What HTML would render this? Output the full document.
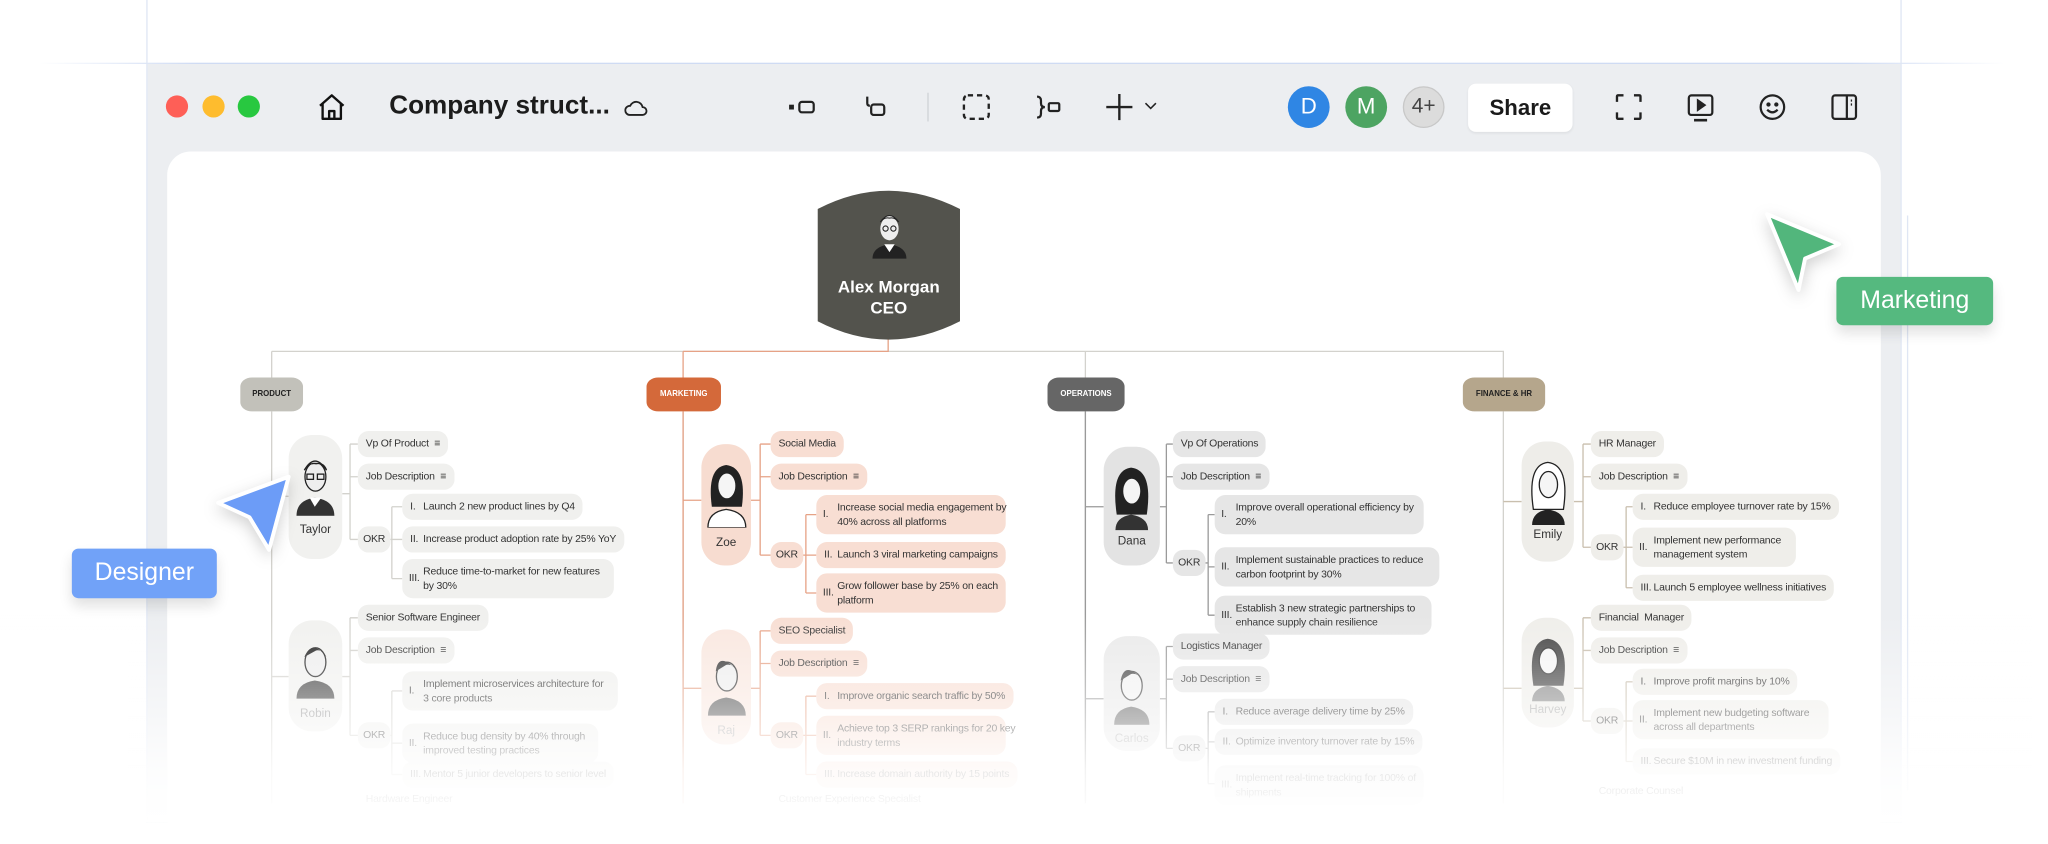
<!DOCTYPE html>
<html><head><meta charset="utf-8"><style>
*{margin:0;padding:0;box-sizing:border-box}
html,body{width:2048px;height:823px;overflow:hidden;background:#fff}
#s{position:absolute;left:0;top:0;width:1568px;height:630px;transform:scale(1.30612);transform-origin:0 0;font-family:"Liberation Sans",sans-serif}
.a{position:absolute}
.c{position:absolute;height:20px;padding:0 6px;border-radius:8px;font:8px "Liberation Sans Narrow","Liberation Sans",sans-serif;line-height:20px;letter-spacing:-0.15px;color:#333;white-space:nowrap;background:#f0f0ee}
.c.c2{height:30px;line-height:11px;padding-top:4px}
.c .n{display:inline-block;width:10px}
.c2 .n{position:absolute;left:5px;top:9px}
.c2 .t{display:block;padding-left:10px}
.m{background:#f8ded3}
.o{background:#e6e6e6}
.f{background:#efeeea}
.av{position:absolute;border-radius:18px;width:41px}
.nm{position:absolute;width:100%;text-align:center;font:9px "Liberation Sans Narrow","Liberation Sans",sans-serif;color:#333}
.dep{position:absolute;height:26px;top:289px;font:bold 6px "Liberation Sans Narrow","Liberation Sans",sans-serif;text-align:center;line-height:26px;border-radius:9px/7px}
.ic{position:absolute;top:71px}
</style></head><body><div id="s">
<div class="a" style="left:30px;top:48px;width:1505px;height:1px;background:linear-gradient(90deg,#fff,#cfdbf3 8%,#cfdbf3 92%,#fff)"></div>
<div class="a" style="left:112px;top:0;width:1px;height:630px;background:#dfe6f4"></div>
<div class="a" style="left:1455px;top:0;width:1px;height:630px;background:#dfe6f4"></div>
<div class="a" style="left:1460px;top:165px;width:1px;height:440px;background:#dfe6f4"></div>
<div class="a" style="left:113px;top:49px;width:1342px;height:581px;background:#eceef1"></div>
<div class="a" style="left:128px;top:116px;width:1312px;height:530px;background:#fff;border-radius:18px"></div>
<div class="a" style="left:127px;top:73px;width:17px;height:17px;border-radius:50%;background:#fe5f57"></div>
<div class="a" style="left:155px;top:73px;width:17px;height:17px;border-radius:50%;background:#febc2e"></div>
<div class="a" style="left:182px;top:73px;width:17px;height:17px;border-radius:50%;background:#28c840"></div>
<svg class="a" style="left:242px;top:70px" width="24" height="24" viewBox="0 0 24 24" fill="none" stroke="#111" stroke-width="1.8" stroke-linejoin="round"><path d="M3 11L12 3l9 8M5 9.5V21h14V9.5M10 21v-6h4v6"/></svg>
<div class="a" style="left:298px;top:70px;font-weight:bold;font-size:20px;color:#1c1c1c">Company struct...</div>
<svg class="a" style="left:478px;top:74px" width="18" height="16" viewBox="0 0 18 16" fill="none" stroke="#222" stroke-width="1.4"><path d="M4 14h10a3 3 0 0 0 0-6 5 5 0 0 0-9.5-1A3.5 3.5 0 0 0 4 14z"/></svg>
<svg class="ic" style="left:603px" width="24" height="22" viewBox="0 0 24 22" fill="none" stroke="#222" stroke-width="1.7"><rect x="2" y="10" width="2" height="2" fill="#222"/><rect x="9" y="7" width="11" height="8" rx="2"/></svg>
<svg class="ic" style="left:659px" width="24" height="22" viewBox="0 0 24 22" fill="none" stroke="#222" stroke-width="1.7"><path d="M5 3v5q0 2 2 2"/><rect x="8" y="9" width="10" height="8" rx="2"/></svg>
<div class="a" style="left:710px;top:71px;width:1px;height:22px;background:#cfd2d6"></div>
<svg class="ic" style="left:736px" width="24" height="22" viewBox="0 0 24 22" fill="none" stroke="#222" stroke-width="1.8" stroke-dasharray="4 3"><rect x="2" y="2" width="19" height="18" rx="3"/></svg>
<svg class="ic" style="left:791px" width="24" height="22" viewBox="0 0 24 22" fill="none" stroke="#222" stroke-width="1.7"><path d="M3 3q3 0 3 3v2q0 3 3 3q-3 0-3 3v2q0 3-3 3"/><rect x="12" y="8" width="8" height="6" rx="1"/></svg>
<svg class="ic" style="left:845px" width="44" height="22" viewBox="0 0 44 22" fill="none" stroke="#222" stroke-width="1.8"><path d="M12 1v20M2 11h20"/><path d="M32 8l4 4 4-4" stroke-width="1.2"/></svg>
<div class="a" style="left:986px;top:66px;width:32px;height:32px;border-radius:50%;background:#2f86e4;color:#fff;font-size:17px;line-height:32px;text-align:center">D</div>
<div class="a" style="left:1030px;top:66px;width:32px;height:32px;border-radius:50%;background:#4da462;color:#fff;font-size:17px;line-height:32px;text-align:center">M</div>
<div class="a" style="left:1074px;top:66px;width:32px;height:32px;border-radius:50%;background:#dcdcdc;border:1px solid #c8c8c8;color:#444;font-size:16px;line-height:30px;text-align:center">4+</div>
<div class="a" style="left:1124px;top:64px;width:80px;height:37px;border-radius:6px;background:#fff;box-shadow:0 1px 2px rgba(0,0,0,.06);color:#1a1a1a;font-size:17px;font-weight:bold;line-height:37px;text-align:center">Share</div>
<svg class="ic" style="left:1236px" width="22" height="22" viewBox="0 0 22 22" fill="none" stroke="#222" stroke-width="1.8"><path d="M2 7V3q0-1 1-1h4M15 2h4q1 0 1 1v4M20 15v4q0 1-1 1h-4M7 20H3q-1 0-1-1v-4"/></svg>
<svg class="ic" style="left:1291px" width="22" height="24" viewBox="0 0 22 24" fill="none" stroke="#222" stroke-width="1.7"><rect x="2" y="2" width="18" height="15" rx="2"/><path d="M9 6l5 3.5L9 13z" fill="#222"/><path d="M6 21h10" stroke-width="2"/></svg>
<svg class="ic" style="left:1346px" width="22" height="22" viewBox="0 0 22 22" fill="none" stroke="#222" stroke-width="1.7"><circle cx="11" cy="11" r="9"/><circle cx="8" cy="9" r=".8" fill="#222"/><circle cx="14" cy="9" r=".8" fill="#222"/><path d="M7 13q4 4 8 0"/></svg>
<svg class="ic" style="left:1401px" width="22" height="22" viewBox="0 0 22 22" fill="none" stroke="#222" stroke-width="1.7"><rect x="2" y="2" width="18" height="18" rx="2"/><path d="M13 2v18M16 6h1M16 9h1"/></svg>

<svg class="a" style="left:0;top:0" width="1568" height="630" fill="none" stroke-width="1">
<g stroke="#d3d2cd"><path d="M208 269H680M680 269H1151V289M208 269V289M831 269V289M208 315V615M523 315V615M831 315V615M1151 315V615"/>
<path d="M208 380H221M262 378H268M268 340V413M268 340h6M268 365h6M268 413h6M296 413h4M300 388V443M300 388h8M300 413h8M300 443h8"/>
<path d="M208 518H221M262 518H268M268 473V563M268 473h6M268 498h6M268 563h6M296 563h4M300 529V593M300 529h8M300 569h8M300 593h8"/></g>
<g stroke="#e6a286"><path d="M523 269H680V258M523 269V289M523 315V615"/>
<path d="M523 383H537M575 383H582M582 340V425M582 340h8M582 365h8M582 425h8M612 425h5M617 394V454M617 394h8M617 425h8M617 454h8"/>
<path d="M523 527H537M575 527H582M582 483V563M582 483h8M582 508h8M582 563h8M612 563h5M617 533V593M617 533h8M617 563h8M617 593h8"/></g>
<g stroke="#9a9a9a"><path d="M831 315V615M831 388H845M888 388H893M893 340V431M893 340h5M893 365h5M893 431h5M920 431h5M925 394V471M925 394h5M925 434h5M925 471h5"/>
<path d="M831 535H845M888 535H893M893 495V573M893 495h5M893 520h5M893 573h5M920 573h5M925 545V600M925 545h5M925 568h5M925 600h5"/></g>
<g stroke="#c9bfae"><path d="M1151 384H1165M1205 384H1212M1212 340V419M1212 340h6M1212 365h6M1212 419h6M1240 419h5M1245 388V450M1245 388h5M1245 419h5M1245 450h5"/>
<path d="M1151 527H1165M1205 527H1212M1212 473V552M1212 473h6M1212 498h6M1212 552h6M1240 552h5M1245 522V583M1245 522h5M1245 552h5M1245 583h5"/></g>
</svg>

<svg class="a" style="left:626px;top:140px" width="109" height="126" viewBox="0 0 109 126"><path d="M0 20Q54-8 109 20V106Q54 134 0 106Z" fill="#53534d"/>
<g transform="translate(38,18)"><path d="M4 40q0-9 13-11q13 2 13 11z" fill="#222"/><path d="M13 29l4 6 4-6" fill="#fff"/><ellipse cx="17" cy="17" rx="7" ry="9" fill="#eee"/><path d="M10 12q7-10 14 0q-3-4-7-3q-4-1-7 3z" fill="#ddd" stroke="#222" stroke-width=".8"/><circle cx="14" cy="17" r="2" fill="none" stroke="#222" stroke-width=".8"/><circle cx="20" cy="17" r="2" fill="none" stroke="#222" stroke-width=".8"/></g>
<text x="54.5" y="84" fill="#fff" font-family="Liberation Sans" font-weight="bold" font-size="13" text-anchor="middle">Alex Morgan</text>
<text x="54.5" y="100" fill="#fff" font-family="Liberation Sans" font-weight="bold" font-size="13" text-anchor="middle">CEO</text></svg>

<div class="dep" style="left:184px;width:48px;background:#c2c1ba;color:#222">PRODUCT</div>
<div class="dep" style="left:495px;width:57px;background:#d4693a;color:#fff">MARKETING</div>
<div class="dep" style="left:802px;width:59px;background:#666;color:#fff">OPERATIONS</div>
<div class="dep" style="left:1120px;width:63px;background:#b5a68c;color:#222">FINANCE &amp; HR</div>

<div class="av" style="left:221px;top:333px;height:95px;background:#f1f1ef"><svg class="a" style="left:4px;top:10px" width="33" height="52" viewBox="0 0 33 52"><path d="M2 52q0-12 14-14q15 2 15 14z" fill="#333"/><path d="M12 38l4 7 5-7z" fill="#fff"/><ellipse cx="16.5" cy="22" rx="8" ry="11" fill="#eee" stroke="#222"/><path d="M8 17q8-14 17 0q-2-6-8-5q-6-1-9 5z" fill="#ccc" stroke="#222"/><rect x="10" y="20" width="5" height="4" fill="none" stroke="#222"/><rect x="18" y="20" width="5" height="4" fill="none" stroke="#222"/></svg><div class="nm" style="top:67px">Taylor</div></div>
<div class="av" style="left:221px;top:475px;height:85px;background:#f1f1ef"><svg class="a" style="left:4px;top:8px" width="33" height="52" viewBox="0 0 33 52"><path d="M2 52q0-12 14-14q15 2 15 14z" fill="#444"/><ellipse cx="16.5" cy="24" rx="8" ry="11" fill="#eee" stroke="#222"/><path d="M8 20q6-14 17 0q-3-6-8-5z" fill="#222"/></svg><div class="nm" style="top:66px;color:#999">Robin</div></div>
<div class="av" style="left:537px;top:340px;height:93px;width:38px;background:#f7dcd0"><svg class="a" style="left:3px;top:8px" width="33" height="56" viewBox="0 0 33 56"><path d="M5 40q-4-30 11-32q16 2 12 32z" fill="#222"/><path d="M2 56q0-12 14-14q15 2 15 14z" fill="#fff" stroke="#222"/><ellipse cx="16.5" cy="24" rx="7" ry="10" fill="#f5f5f5" stroke="#222"/></svg><div class="nm" style="top:70px">Zoe</div></div>
<div class="av" style="left:537px;top:482px;height:88px;width:38px;background:#f9e7df"><svg class="a" style="left:3px;top:10px" width="33" height="56" viewBox="0 0 33 56"><path d="M2 56q0-12 14-14q15 2 15 14z" fill="#555"/><ellipse cx="16.5" cy="26" rx="8" ry="11" fill="#eee" stroke="#333"/><path d="M8 22q2-16 17 0q-4-6-9-5z" fill="#333"/></svg><div class="nm" style="top:72px;color:#aaa">Raj</div></div>
<div class="av" style="left:845px;top:342px;height:91px;width:43px;background:#e3e3e3"><svg class="a" style="left:5px;top:8px" width="33" height="56" viewBox="0 0 33 56"><path d="M5 44q-5-34 11-36q17 2 12 36z" fill="#222"/><path d="M4 56q0-10 12-12q13 2 13 12z" fill="#333"/><ellipse cx="16.5" cy="26" rx="7" ry="10" fill="#f5f5f5" stroke="#222"/></svg><div class="nm" style="top:67px">Dana</div></div>
<div class="av" style="left:845px;top:487px;height:88px;width:43px;background:#eaeaea"><svg class="a" style="left:5px;top:12px" width="33" height="56" viewBox="0 0 33 56"><path d="M3 56q0-12 13-14q14 2 14 14z" fill="#666"/><ellipse cx="16.5" cy="26" rx="8" ry="11" fill="#f2f2f2" stroke="#444"/><path d="M8 22q3-16 17 0q-4-6-9-5z" fill="#444"/></svg><div class="nm" style="top:73px;color:#aaa">Carlos</div></div>
<div class="av" style="left:1165px;top:338px;height:92px;width:40px;background:#eeede9"><svg class="a" style="left:4px;top:8px" width="33" height="56" viewBox="0 0 33 56"><path d="M5 44q-5-34 11-36q17 2 12 36z" fill="#fff" stroke="#222"/><path d="M4 56q0-10 12-12q13 2 13 12z" fill="#222"/><ellipse cx="16.5" cy="25" rx="7" ry="10" fill="#f5f5f5" stroke="#222"/></svg><div class="nm" style="top:66px">Emily</div></div>
<div class="av" style="left:1165px;top:473px;height:84px;width:40px;background:#efeeea"><svg class="a" style="left:4px;top:8px" width="33" height="56" viewBox="0 0 33 56"><path d="M5 44q-5-34 11-36q17 2 12 36z" fill="#444"/><path d="M4 56q0-10 12-12q13 2 13 12z" fill="#888"/><ellipse cx="16.5" cy="25" rx="7" ry="10" fill="#f5f5f5" stroke="#333"/></svg><div class="nm" style="top:65px;color:#aaa">Harvey</div></div>

<div class="c" style="left:274px;top:330px">Vp Of Product &nbsp;≡</div>
<div class="c" style="left:274px;top:355px">Job Description &nbsp;≡</div>
<div class="c" style="left:274px;top:403px;padding:0 4px">OKR</div>
<div class="c" style="left:308px;top:378px"><span class="n">I.</span>Launch 2 new product lines by Q4</div>
<div class="c" style="left:308px;top:403px"><span class="n">II.</span>Increase product adoption rate by 25% YoY</div>
<div class="c c2" style="left:308px;top:428px;width:162px"><span class="n">III.</span><span class="t">Reduce time-to-market for new features<br>by 30%</span></div>
<div class="c" style="left:274px;top:463px">Senior Software Engineer</div>
<div class="c" style="left:274px;top:488px">Job Description &nbsp;≡</div>
<div class="c" style="left:274px;top:553px;padding:0 4px">OKR</div>
<div class="c c2" style="left:308px;top:514px;width:165px"><span class="n">I.</span><span class="t">Implement microservices architecture for<br>3 core products</span></div>
<div class="c c2" style="left:308px;top:554px;width:150px"><span class="n">II.</span><span class="t">Reduce bug density by 40% through<br>improved testing practices</span></div>
<div class="c" style="left:308px;top:583px"><span class="n">III.</span>Mentor 5 junior developers to senior level</div>
<div class="c" style="left:274px;top:602px;background:none">Hardware Engineer</div>

<div class="c m" style="left:590px;top:330px">Social Media</div>
<div class="c m" style="left:590px;top:355px">Job Description &nbsp;≡</div>
<div class="c m" style="left:590px;top:415px;padding:0 4px">OKR</div>
<div class="c c2 m" style="left:625px;top:379px;width:145px"><span class="n">I.</span><span class="t">Increase social media engagement by<br>40% across all platforms</span></div>
<div class="c m" style="left:625px;top:415px"><span class="n">II.</span>Launch 3 viral marketing campaigns</div>
<div class="c c2 m" style="left:625px;top:439px;width:145px"><span class="n">III.</span><span class="t">Grow follower base by 25% on each<br>platform</span></div>
<div class="c m" style="left:590px;top:473px">SEO Specialist</div>
<div class="c m" style="left:590px;top:498px">Job Description &nbsp;≡</div>
<div class="c m" style="left:590px;top:553px;padding:0 4px">OKR</div>
<div class="c m" style="left:625px;top:523px"><span class="n">I.</span>Improve organic search traffic by 50%</div>
<div class="c c2 m" style="left:625px;top:548px;width:145px"><span class="n">II.</span><span class="t">Achieve top 3 SERP rankings for 20 key<br>industry terms</span></div>
<div class="c m" style="left:625px;top:583px"><span class="n">III.</span>Increase domain authority by 15 points</div>
<div class="c" style="left:590px;top:602px;background:none">Customer Experience Specialist</div>

<div class="c o" style="left:898px;top:330px">Vp Of Operations</div>
<div class="c o" style="left:898px;top:355px">Job Description &nbsp;≡</div>
<div class="c o" style="left:898px;top:421px;padding:0 4px">OKR</div>
<div class="c c2 o" style="left:930px;top:379px;width:160px"><span class="n">I.</span><span class="t">Improve overall operational efficiency by<br>20%</span></div>
<div class="c c2 o" style="left:930px;top:419px;width:172px"><span class="n">II.</span><span class="t">Implement sustainable practices to reduce<br>carbon footprint by 30%</span></div>
<div class="c c2 o" style="left:930px;top:456px;width:166px"><span class="n">III.</span><span class="t">Establish 3 new strategic partnerships to<br>enhance supply chain resilience</span></div>
<div class="c o" style="left:898px;top:485px">Logistics Manager</div>
<div class="c o" style="left:898px;top:510px">Job Description &nbsp;≡</div>
<div class="c o" style="left:898px;top:563px;padding:0 4px">OKR</div>
<div class="c o" style="left:930px;top:535px"><span class="n">I.</span>Reduce average delivery time by 25%</div>
<div class="c o" style="left:930px;top:558px"><span class="n">II.</span>Optimize inventory turnover rate by 15%</div>
<div class="c c2 o" style="left:930px;top:586px;width:160px"><span class="n">III.</span><span class="t">Implement real-time tracking for 100% of<br>shipments</span></div>

<div class="c f" style="left:1218px;top:330px">HR Manager</div>
<div class="c f" style="left:1218px;top:355px">Job Description &nbsp;≡</div>
<div class="c f" style="left:1218px;top:409px;padding:0 4px">OKR</div>
<div class="c f" style="left:1250px;top:378px"><span class="n">I.</span>Reduce employee turnover rate by 15%</div>
<div class="c c2 f" style="left:1250px;top:404px;width:125px"><span class="n">II.</span><span class="t">Implement new performance<br>management system</span></div>
<div class="c f" style="left:1250px;top:440px"><span class="n">III.</span>Launch 5 employee wellness initiatives</div>
<div class="c f" style="left:1218px;top:463px">Financial &nbsp;Manager</div>
<div class="c f" style="left:1218px;top:488px">Job Description &nbsp;≡</div>
<div class="c f" style="left:1218px;top:542px;padding:0 4px">OKR</div>
<div class="c f" style="left:1250px;top:512px"><span class="n">I.</span>Improve profit margins by 10%</div>
<div class="c c2 f" style="left:1250px;top:536px;width:150px"><span class="n">II.</span><span class="t">Implement new budgeting software<br>across all departments</span></div>
<div class="c f" style="left:1250px;top:573px"><span class="n">III.</span>Secure $10M in new investment funding</div>
<div class="c" style="left:1218px;top:596px;background:none">Corporate Counsel</div>

<div class="a" style="left:0;top:470px;width:1568px;height:160px;background:linear-gradient(180deg,rgba(255,255,255,0) 0%,rgba(255,255,255,.5) 45%,rgba(255,255,255,.88) 75%,#fff 100%)"></div>

<svg class="a" style="left:155px;top:355px;filter:drop-shadow(0 4px 6px rgba(0,0,0,.18))" width="80" height="80" viewBox="155 355 80 80"><path d="M221 365L167 385L191 396L206 421Z" fill="#6c9cf7" stroke="#fff" stroke-width="3" stroke-linejoin="round"/></svg>
<div class="a" style="left:55px;top:420px;width:111px;height:38px;border-radius:5px;background:#71a2f8;color:#fff;font-size:19px;line-height:38px;text-align:center;box-shadow:0 6px 10px rgba(0,0,0,.12)">Designer</div>
<svg class="a" style="left:1340px;top:155px;filter:drop-shadow(0 4px 6px rgba(0,0,0,.18))" width="80" height="80" viewBox="1340 155 80 80"><path d="M1353 164L1408 187L1382 198L1377 222Z" fill="#52b67c" stroke="#fff" stroke-width="3" stroke-linejoin="round"/></svg>
<div class="a" style="left:1406px;top:212px;width:120px;height:37px;border-radius:5px;background:#55b97f;color:#fff;font-size:19px;line-height:37px;text-align:center;box-shadow:0 6px 10px rgba(0,0,0,.12)">Marketing</div>
</div></body></html>
